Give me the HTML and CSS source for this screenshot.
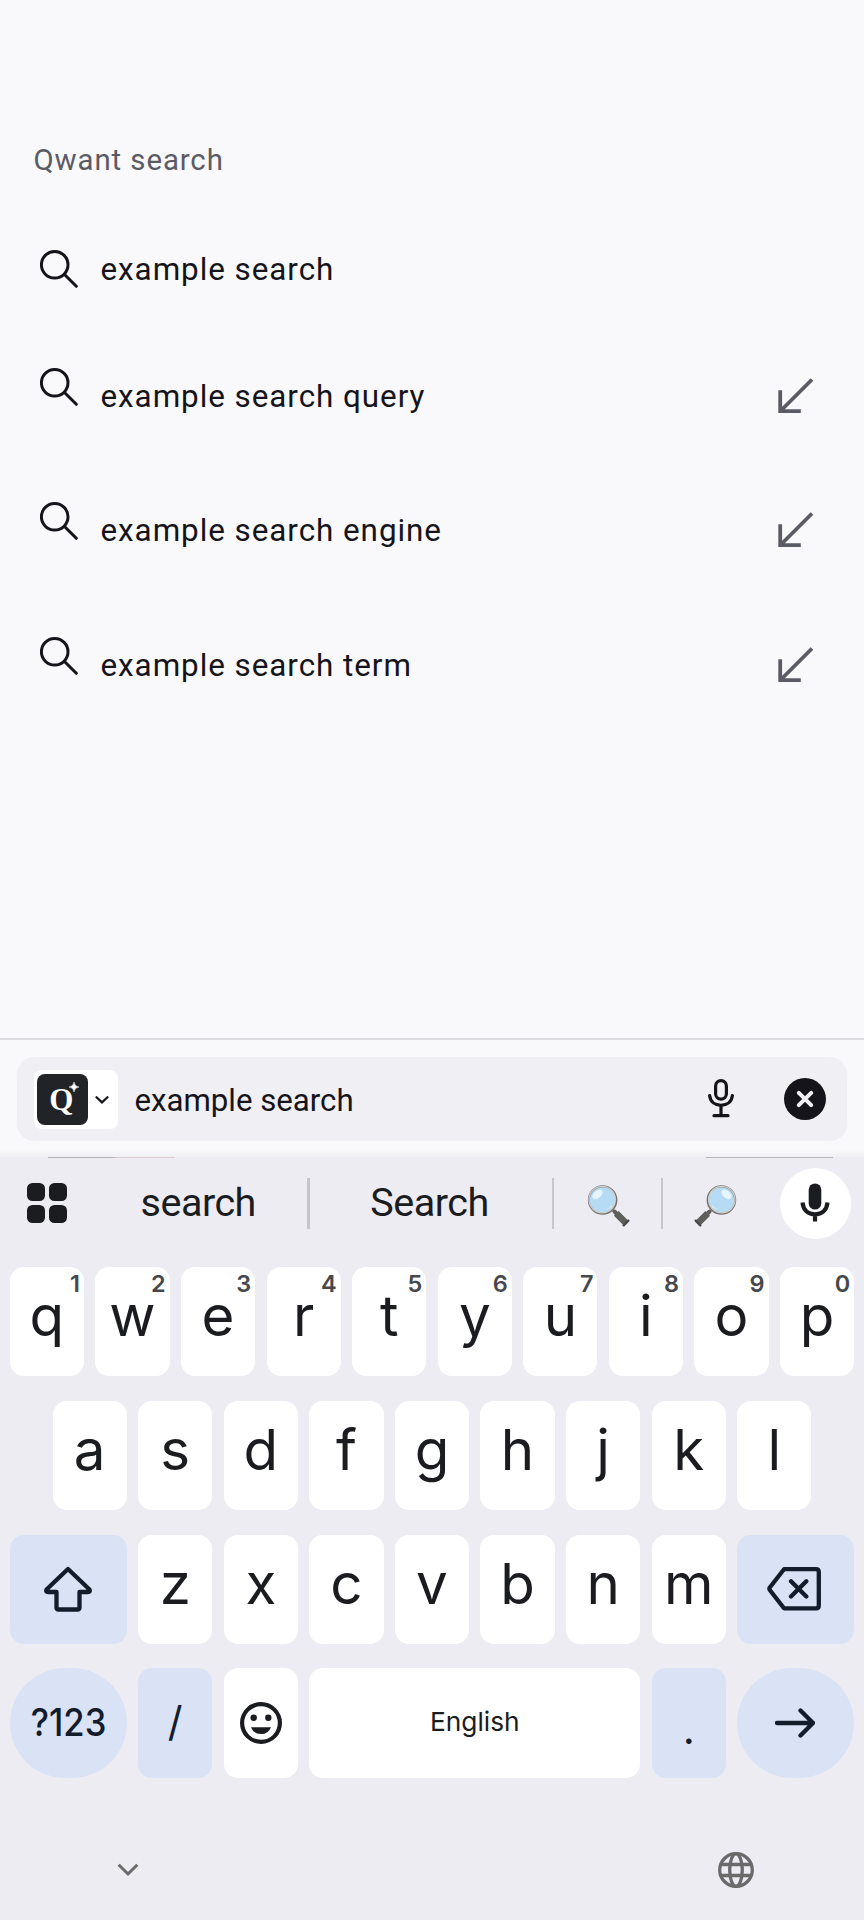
FILE: index.html
```html
<!DOCTYPE html>
<html lang="en">
<head>
<meta charset="utf-8">
<title>Search</title>
<link rel="stylesheet" href="styles.css">
</head>
<body>
<svg class="defs" aria-hidden="true">
  <symbol id="search" viewBox="0 0 38 38"><circle cx="14.7" cy="14.8" r="13.3"/><path d="M24.500 24.500 36.300 36.300"/></symbol>
  <symbol id="fill" viewBox="0 0 36 36"><path d="M34 1.500 2.500 33M2.200 12.300V33.200H22.800"/></symbol>
  <symbol id="lens" viewBox="0 0 44 44">
    <path d="M26 26.500 38.400 38.800" stroke="#a9a9a9" stroke-width="3"/>
    <path d="M29.300 29.300 39.300 39.300" stroke="#5e5e5c" stroke-width="6.600"/>
    <path d="M27.500 27.500 29 29" stroke="#5e5e5c" stroke-width="4" stroke-linecap="round"/>
    <path d="M36.700 41.300 41.300 36.700" stroke="#494947" stroke-width="2.400" stroke-linecap="round"/>
    <circle cx="15.600" cy="16" r="13.800" fill="#b5dbf5" stroke="#74716e" stroke-width="2"/>
    <circle cx="15.200" cy="15.600" r="13.200" fill="none" stroke="#cfcecb" stroke-width="1.300"/>
    <ellipse cx="10.500" cy="10.400" rx="6" ry="3.600" transform="rotate(-42 10.500 10.400)" fill="#e7f5ff"/>
    <path d="M17.500 25.400Q23 24.600 25.200 20.600Q25.200 25.300 17.500 25.400Z" fill="#e2f3ff"/>
  </symbol>
</svg>
<main class="screen">
  <section class="results">
    <h1 class="title">Qwant search</h1>
    <div class="row first"><svg class="glass"><use href="#search"/></svg><span class="label">example search</span></div>
    <div class="row"><svg class="glass"><use href="#search"/></svg><span class="label">example search query</span><svg class="fill"><use href="#fill"/></svg></div>
    <div class="row"><svg class="glass"><use href="#search"/></svg><span class="label">example search engine</span><svg class="fill"><use href="#fill"/></svg></div>
    <div class="row"><svg class="glass"><use href="#search"/></svg><span class="label">example search term</span><svg class="fill"><use href="#fill"/></svg></div>
  </section>

  <section class="toolbar">
    <div class="field">
      <div class="chip">
        <div class="logo"><span>Q</span><svg class="spark" viewBox="0 0 10 10"><path d="M5 0Q5.500 4.500 10 5Q5.500 5.500 5 10Q4.500 5.500 0 5Q4.500 4.500 5 0Z"/></svg></div>
        <svg class="caret" viewBox="0 0 14 8"><path d="M1.500 1.200 7 6.400 12.500 1.200"/></svg>
      </div>
      <span class="query">example search</span>
      <svg class="voice" viewBox="0 0 26 39"><rect x="7.600" y="1.600" width="10.800" height="18.600" rx="5.400"/><path d="M1.600 16.500C2.400 23 7 26.300 13 26.300S23.600 23 24.400 16.500M13 26.300V36.500M6 36.700H20"/></svg>
      <svg class="clear" viewBox="0 0 42 42"><circle cx="21" cy="21" r="21"/><path d="M14.800 14.800 27.200 27.200M27.200 14.800 14.800 27.200"/></svg>
    </div>
  </section>

  <section class="keyboard">
    <div class="peek"><i></i><i></i></div>
    <div class="strip">
      <svg class="apps" viewBox="0 0 40 40"><rect width="18" height="18" rx="5.500"/><rect x="22" width="18" height="18" rx="5.500"/><rect y="22" width="18" height="18" rx="5.500"/><rect x="22" y="22" width="18" height="18" rx="5.500"/></svg>
      <span class="word w1">search</span><b class="bar"></b>
      <span class="word w2">Search</span><b class="bar"></b>
      <span class="word w3"><svg class="lens"><use href="#lens"/></svg></span><b class="bar"></b>
      <span class="word w3"><svg class="lens flip"><use href="#lens"/></svg></span>
      <div class="mic"><svg viewBox="0 0 30 41"><rect x="8.700" y=".5" width="12.600" height="26" rx="6.300"/><path d="M2.500 19.500C3.300 27.500 8.500 31.300 15 31.300S26.700 27.500 27.500 19.500M15 31.300V38.500"/></svg></div>
    </div>
    <div class="keys">
      <div class="line"><div class="key">q<sup>1</sup></div><div class="key">w<sup>2</sup></div><div class="key">e<sup>3</sup></div><div class="key">r<sup>4</sup></div><div class="key">t<sup>5</sup></div><div class="key">y<sup>6</sup></div><div class="key">u<sup>7</sup></div><div class="key">i<sup>8</sup></div><div class="key">o<sup>9</sup></div><div class="key">p<sup>0</sup></div></div>
      <div class="line"><div class="key">a</div><div class="key">s</div><div class="key">d</div><div class="key">f</div><div class="key">g</div><div class="key">h</div><div class="key">j</div><div class="key">k</div><div class="key">l</div></div>
      <div class="line">
        <div class="key wide"><svg class="shift" viewBox="0 0 48 46"><path d="M24 3 2.500 23.500Q1.500 26 4 26H12.500V41.500Q12.500 43.500 14.500 43.500H33.500Q35.500 43.500 35.500 41.500V26H44Q46.500 26 45.500 23.500Z"/></svg></div>
        <div class="key">z</div><div class="key">x</div><div class="key">c</div><div class="key">v</div><div class="key">b</div><div class="key">n</div><div class="key">m</div>
        <div class="key wide"><svg class="back" viewBox="0 0 54 44"><path d="M17 2.200H49Q51.800 2.200 51.800 5V38.500Q51.800 41.300 49 41.300H17L2.800 23Q2 21.800 2.800 20.500ZM24 14.200 39.300 29.500M39.300 14.200 24 29.500"/></svg></div>
      </div>
      <div class="line">
        <div class="key wide round sym"><span>?123</span></div>
        <div class="key tint slash">/</div>
        <div class="key"><svg class="smile" viewBox="0 0 42 42"><circle class="ring" cx="21" cy="21" r="18.900"/><circle cx="13.700" cy="15.800" r="3.200"/><circle cx="28.300" cy="15.800" r="3.200"/><path d="M11 25.200H31Q28.500 32 21 32T11 25.200Z"/></svg></div>
        <div class="key space">English</div>
        <div class="key tint dot">.</div>
        <div class="key wide round"><svg class="go" viewBox="0 0 40 30"><path d="M2 15H38M25.500 2.500 38 15 25.500 27.500"/></svg></div>
      </div>
    </div>
    <div class="nav">
      <svg class="down" viewBox="0 0 22 14"><path d="M1.700 1.700 11 11 20.300 1.700"/></svg>
      <svg class="globe" viewBox="0 0 36 36"><circle cx="18" cy="18" r="16.300"/><ellipse cx="18" cy="18" rx="6.300" ry="16.300"/><path d="M3 12.500H33M3 23.500H33"/></svg>
    </div>
  </section>
</main>
</body>
</html>
```
FILE: styles.css
```css
* { box-sizing: border-box; }
body { margin: 0; background: #f9f9fc; font-family: Roboto, sans-serif; color: #15141a; }
svg { display: block; flex: none; }
.defs { position: absolute; width: 0; height: 0; }
.screen { width: 864px; height: 1920px; display: flex; flex-direction: column; overflow: hidden; }

.results { height: 1038px; }
.title { height: 210px; margin: 0; padding: 140px 0 0 33.500px; font-size: 29.400px; line-height: 40px; font-weight: 400; letter-spacing: .9px; color: #5b5b66; }
.row { height: 134.400px; display: flex; align-items: center; padding: 0 50px 0 39.700px; }
.row.first { height: 118.800px; }
.glass { width: 38px; height: 38px; fill: none; stroke: #15141a; stroke-width: 3px; stroke-linecap: round; margin-bottom: 18px; }
.first .glass { margin-bottom: 0; }
.label { margin-left: 22.800px; flex: 1; font-size: 31.400px; letter-spacing: .95px; line-height: 40px; padding-top: 1.500px; }
.fill { width: 36px; height: 36px; fill: none; stroke: #5b5b66; stroke-width: 3.800px; }

.toolbar { height: 119px; padding: 17px 17px 0; border-top: 2px solid #dfdfe3; background: linear-gradient(#f9f9fc 0 110px, #edecf2 119px); }
.field { height: 84px; border-radius: 17px; background: #f0eff4; display: flex; align-items: center; padding-left: 17px; }
.chip { width: 84px; height: 59px; margin-top: 1px; border-radius: 8px; background: #fff; display: flex; align-items: center; padding-left: 3.300px; }
.logo { position: relative; width: 51px; height: 51px; border-radius: 8px; background: #212327; color: #fff; font: bold 31px/52px "Liberation Serif", serif; text-align: center; }
.logo span { display: block; padding-right: 3px; }
.spark { position: absolute; left: 32px; top: 8px; width: 10px; height: 10px; fill: #fff; stroke: #fff; stroke-width: .5; }
.caret { width: 14px; height: 8px; margin: 1px 0 0 7.200px; fill: none; stroke: #15141a; stroke-width: 2.200; stroke-linecap: round; }
.query { margin-left: 16.500px; width: 573.500px; font-size: 31.200px; line-height: 40px; padding-top: 3px; }
.voice { width: 26px; height: 39px; fill: none; stroke: #15141a; stroke-width: 3.200; stroke-linecap: round; margin-bottom: 1px; }
.clear { width: 42px; height: 42px; margin: 0 0 1px 49.500px; fill: #15141a; }
.clear path { stroke: #f0eff4; stroke-width: 4; stroke-linecap: round; }

.keyboard { height: 763px; background: #edecf2; color: #1b1c1f; }
.peek { height: 1px; display: flex; justify-content: space-between; padding: 0 31px 0 48px; }
.peek i { width: 127px; height: 1px; background: #b6b6bb; }
.peek i:first-child { background: linear-gradient(90deg, #b0b0b4 50%, #d8cdcb 55%); }
.strip { height: 90px; display: flex; align-items: center; padding: 0 0 0 27px; }
.apps { width: 40px; height: 40px; fill: #1b1c20; }
.word { display: flex; justify-content: center; font-size: 39.500px; line-height: 46px; letter-spacing: -.5px; }
.w1 { width: 240px; padding-left: 22.500px; }
.w2 { width: 242px; padding-right: 2px; }
.w3 { width: 106.500px; }
.bar { width: 2.500px; height: 51px; background: #c3c6ca; }
.lens { width: 44px; height: 44px; margin: 5px 0 0 4px; }
.lens.flip { transform: scaleX(-1); margin-left: -3px; }
.mic { width: 71px; height: 71px; margin-left: 10px; border-radius: 50%; background: #fff; display: flex; align-items: center; justify-content: center; }
.mic svg { width: 30px; height: 41px; fill: #1b1c20; }
.mic path { fill: none; stroke: #1b1c20; stroke-width: 4.200; }

.keys { padding-top: 19px; display: flex; flex-direction: column; gap: 24.600px; }
.line { display: flex; justify-content: center; gap: 11.400px; }
.key { position: relative; width: 74.200px; height: 109.200px; border-radius: 14px; background: #fff; display: flex; align-items: center; justify-content: center; padding: 0 0 10.500px; font: 400 56.500px/60px Inter, sans-serif; }
.key:has(svg) { padding: 0; }
.key sup { position: absolute; top: 5px; right: 4px; font-size: 23.500px; line-height: 24px; font-weight: 600; color: #47484d; }
.wide { width: 117px; background: #dae3f6; }
.tint { background: #dae3f6; color: #131c2b; }
.round { border-radius: 55px; color: #131c2b; }
.sym { font-size: 38px; font-weight: 500; letter-spacing: 0; padding: 0 0 2px; }
.sym span { transform: scaleX(.91); }
.slash { font-size: 41px; padding: 0 0 3px; }
.dot { font-size: 42px; padding: 12px 0 0; }
.space { width: 331.200px; font-size: 26.300px; padding: 0 0 2px; }
.shift, .back, .go { fill: none; stroke: #131c2b; stroke-width: 4.300; stroke-linejoin: round; stroke-linecap: round; }
.shift { width: 48px; height: 46px; }
.back { width: 54px; height: 44px; margin-left: -3px; }
.go { width: 40px; height: 30px; margin-left: -1px; }
.smile { width: 42px; height: 42px; fill: #1b1c1f; }
.ring { fill: none; stroke: #1b1c1f; stroke-width: 4.200; }
.nav { height: 142px; display: flex; justify-content: space-between; align-items: center; padding: 43px 110px 0 117px; }
.down { width: 22px; height: 14px; fill: none; stroke: #6a6a6a; stroke-width: 3; }
.globe { width: 36px; height: 36px; fill: none; stroke: #6a6a6a; stroke-width: 3.300; }
```
